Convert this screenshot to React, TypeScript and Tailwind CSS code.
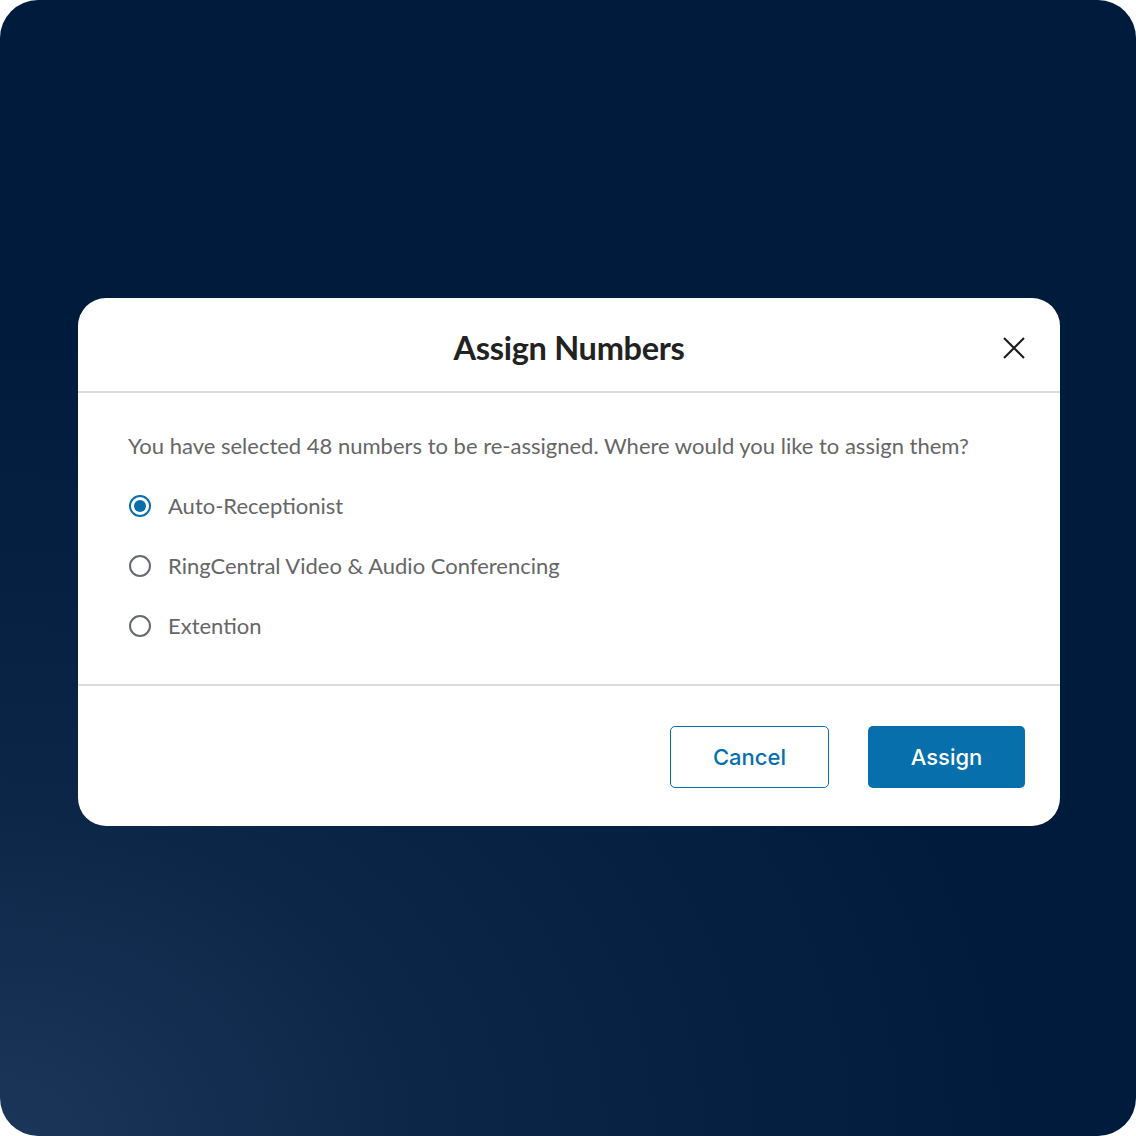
import { useState } from "react";

const OPTIONS = [
  { id: "ar", label: "Auto-Receptionist" },
  { id: "rcv", label: "RingCentral Video & Audio Conferencing" },
  { id: "ext", label: "Extention" },
];

function Radio({ checked }: { checked: boolean }) {
  return (
    <span
      className={`ml-[1px] flex h-[22px] w-[22px] shrink-0 items-center justify-center rounded-full border-2 ${
        checked ? "border-[#066fac]" : "border-[#666a70]"
      }`}
    >
      {checked && <span className="h-[12px] w-[12px] rounded-full bg-[#066fac]" />}
    </span>
  );
}

export default function App() {
  const [selected, setSelected] = useState("ar");

  return (
    <div className="h-[1136px] w-[1136px] bg-white">
      <div className="flex h-full w-full flex-col items-center rounded-[38px] bg-[radial-gradient(ellipse_90%_70%_at_0%_100%,#1b3658_0%,#0a2546_45%,#001b3b_100%)] pl-[2px] pt-[298px] font-['Lato','Noto_Sans',sans-serif]">
        <div className="flex w-[982px] flex-col rounded-[28px] bg-white">
          <div className="relative flex h-[95px] items-center justify-center border-b-2 border-[#dcdcdc] pt-[7px]">
            <h2 className="text-[32.5px] font-bold tracking-[-0.3px] text-[#222]">Assign Numbers</h2>
            <button className="absolute right-[34px] top-[38px] text-[#1a1a1a]">
              <svg width="24" height="24" viewBox="0 0 24 24" fill="none" stroke="currentColor" strokeWidth="2">
                <path d="M2 2L22 22M22 2L2 22" />
              </svg>
            </button>
          </div>

          <div className="flex flex-col gap-[34px] px-[50px] pb-[45px] pt-[40px]">
            <p className="text-[22px] leading-[26px] text-[#666]">
              You have selected 48 numbers to be re-assigned. Where would you like to assign them?
            </p>
            {OPTIONS.map(o => (
              <label
                key={o.id}
                onClick={() => setSelected(o.id)}
                className="flex cursor-pointer items-center gap-[17px] text-[22px] leading-[26px] text-[#666]"
              >
                <Radio checked={selected === o.id} />
                {o.label}
              </label>
            ))}
          </div>

          <div className="flex justify-end gap-[39px] border-t-2 border-[#dcdcdc] pb-[38px] pl-[50px] pr-[35px] pt-[40px]">
            <button className="h-[62px] w-[159px] rounded-[5px] border border-[#066fac] font-['Inter',sans-serif] text-[22px] font-medium text-[#066fac]">
              Cancel
            </button>
            <button className="h-[62px] w-[157px] rounded-[5px] bg-[#066fac] font-['Inter',sans-serif] text-[22px] font-medium text-white">
              Assign
            </button>
          </div>
        </div>
      </div>
    </div>
  );
}
